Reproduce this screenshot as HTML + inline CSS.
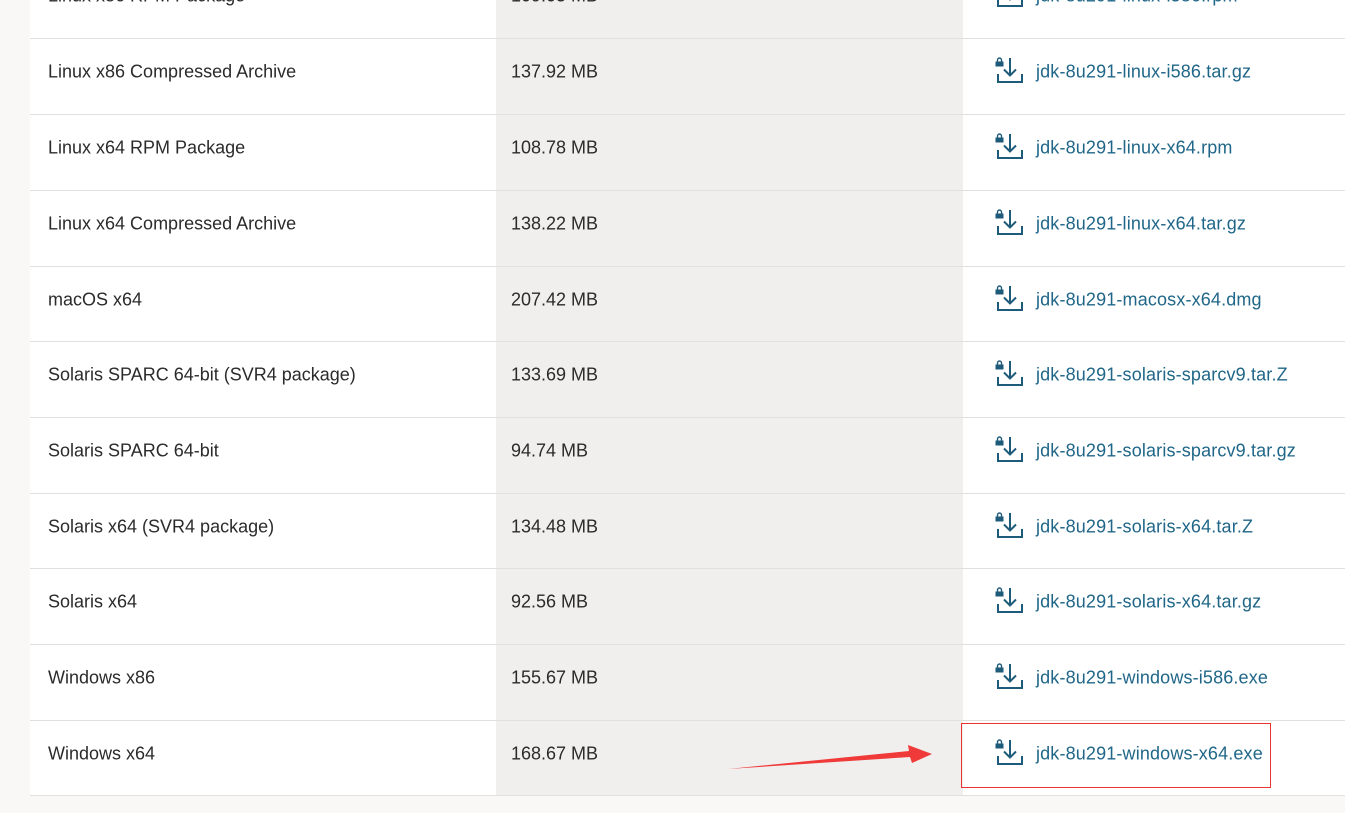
<!DOCTYPE html>
<html><head><meta charset="utf-8"><style>
body{margin:0;width:1345px;height:813px;overflow:hidden;background:#f9f8f6;font-family:"Liberation Sans",sans-serif;position:relative}
.t{position:absolute;left:30px;top:0;width:1315px;height:795px;background:#fff}
.c2{position:absolute;left:496px;top:0;width:467px;height:795px;background:#f1efed}
.ln{position:absolute;left:30px;width:1315px;height:1px;background:#e2e0de}
.r{position:absolute;left:0;width:1345px;height:76px;color:#2b2b2b;font-size:18px}
.r span{position:absolute;top:34px;transform:translateY(-50%);white-space:nowrap}
.a{left:48px}.b{left:511px}.l{left:1036px;color:#1f6688;letter-spacing:0.15px}
.r svg{position:absolute;left:993px;top:19px}
</style></head><body>
<div class="t"></div><div class="c2"></div>
<div id="rows"></div>
<div style="position:absolute;left:961px;top:723px;width:308px;height:63px;border:1px solid #ee3333"></div>
<svg style="position:absolute;left:720px;top:740px" width="220" height="35"><polygon points="8,29 190,17 192,23 212,14 188,5 189,11" fill="#f03a3a"/></svg>
<script>
var d=[["Linux x86 RPM Package","109.05 MB","jdk-8u291-linux-i586.rpm"],["Linux x86 Compressed Archive","137.92 MB","jdk-8u291-linux-i586.tar.gz"],["Linux x64 RPM Package","108.78 MB","jdk-8u291-linux-x64.rpm"],["Linux x64 Compressed Archive","138.22 MB","jdk-8u291-linux-x64.tar.gz"],["macOS x64","207.42 MB","jdk-8u291-macosx-x64.dmg"],["Solaris SPARC 64-bit (SVR4 package)","133.69 MB","jdk-8u291-solaris-sparcv9.tar.Z"],["Solaris SPARC 64-bit","94.74 MB","jdk-8u291-solaris-sparcv9.tar.gz"],["Solaris x64 (SVR4 package)","134.48 MB","jdk-8u291-solaris-x64.tar.Z"],["Solaris x64","92.56 MB","jdk-8u291-solaris-x64.tar.gz"],["Windows x86","155.67 MB","jdk-8u291-windows-i586.exe"],["Windows x64","168.67 MB","jdk-8u291-windows-x64.exe"]];
var tops=[-38,38,114,190,266,341,417,493,568,644,720];
var ic='<svg width="32" height="30" viewBox="0 0 32 30"><path d="M4.5 4.5V3a2 2 0 0 1 4 0V4.5" fill="none" stroke="#1e5b7a" stroke-width="1.4"/><rect x="2.5" y="4.5" width="8" height="5" fill="#1e5b7a"/><path d="M17 1V18M11 12.5L17 18.5L23 12.5" fill="none" stroke="#1e5b7a" stroke-width="2"/><path d="M5 17V25H29V17" fill="none" stroke="#1e5b7a" stroke-width="2"/></svg>';
var h='';
for(var i=0;i<d.length;i++){h+='<div class="r" style="top:'+tops[i]+'px"><span class="a">'+d[i][0]+'</span><span class="b">'+d[i][1]+'</span>'+ic+'<span class="l">'+d[i][2]+'</span></div>';}
for(var i=1;i<tops.length;i++)h+='<div class="ln" style="top:'+tops[i]+'px"></div>';
h+='<div class="ln" style="top:795px"></div>';
document.getElementById('rows').innerHTML=h;
</script>
</body></html>
